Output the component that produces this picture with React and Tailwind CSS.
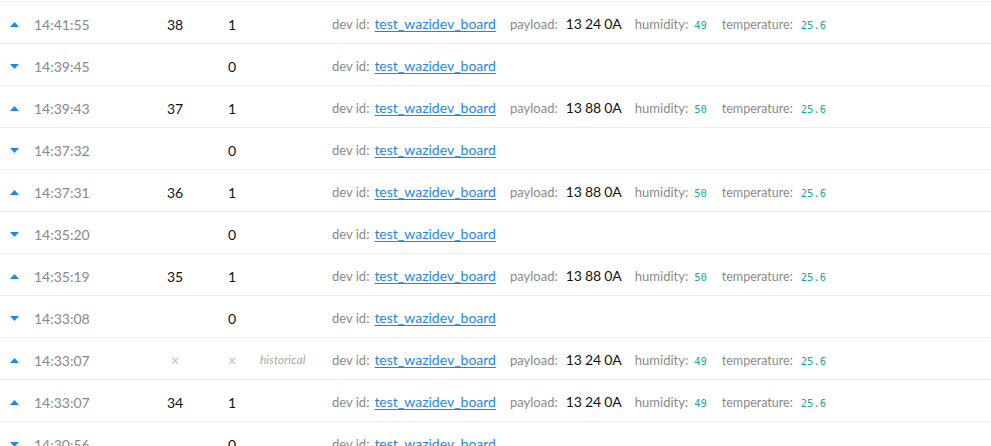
import React from "react";

const rows = [
  { dir: "up", time: "14:41:55", cnt: "38", port: "1", payload: ["13", "24", "0A"], hum: "49", temp: "25.6" },
  { dir: "down", time: "14:39:45", port: "0" },
  { dir: "up", time: "14:39:43", cnt: "37", port: "1", payload: ["13", "88", "0A"], hum: "50", temp: "25.6" },
  { dir: "down", time: "14:37:32", port: "0" },
  { dir: "up", time: "14:37:31", cnt: "36", port: "1", payload: ["13", "88", "0A"], hum: "50", temp: "25.6" },
  { dir: "down", time: "14:35:20", port: "0" },
  { dir: "up", time: "14:35:19", cnt: "35", port: "1", payload: ["13", "88", "0A"], hum: "50", temp: "25.6" },
  { dir: "down", time: "14:33:08", port: "0" },
  { dir: "up", time: "14:33:07", historical: true, payload: ["13", "24", "0A"], hum: "49", temp: "25.6" },
  { dir: "up", time: "14:33:07", cnt: "34", port: "1", payload: ["13", "24", "0A"], hum: "49", temp: "25.6" },
  { dir: "down", time: "14:30:56", port: "0" },
];

function Arrow({ dir }) {
  return (
    <svg width="9" height="5" viewBox="0 0 9 5" className="block">
      {dir === "up" ? (
        <polygon points="0,5 4.5,0 9,5" fill="#1e88e5" />
      ) : (
        <polygon points="0,0 4.5,5 9,0" fill="#1e88e5" />
      )}
    </svg>
  );
}

function Row({ r }) {
  return (
    <div className="flex h-[42px] items-center pt-[3px] border-t border-[#ececec] whitespace-nowrap">
      <div className="w-[34px] pl-[10px] flex items-center">
        <Arrow dir={r.dir} />
      </div>
      <div className="w-[110px] text-[14px] text-[#888888]">{r.time}</div>
      <div className="w-[62px] text-center text-[14px] text-[#111111]">
        {r.historical ? <span className="text-[15px] text-[#bdbdbd]">×</span> : r.cnt}
      </div>
      <div className="w-[52px] text-center text-[14px] text-[#111111]">
        {r.historical ? <span className="text-[15px] text-[#bdbdbd]">×</span> : r.port}
      </div>
      <div className="w-[74px] pl-[2px] text-[12px] italic text-[#aaaaaa]">
        {r.historical ? "historical" : ""}
      </div>
      <div className="flex items-baseline">
        <span className="text-[13px] text-[#8a8a8a]">dev id:</span>
        <a className="ml-[5px] text-[14px] text-[#1e88e5] underline underline-offset-[2px] cursor-pointer">
          test_wazidev_board
        </a>
        {r.payload && (
          <>
            <span className="ml-[14px] text-[13px] text-[#8a8a8a]">payload:</span>
            <span className="ml-[8px] text-[14px] text-[#111111] flex gap-[3px]">
              {r.payload.map((b, i) => (
                <span key={i}>{b}</span>
              ))}
            </span>
            <span className="ml-[13px] text-[13px] text-[#8a8a8a]">humidity:</span>
            <span className="ml-[6px] text-[10.5px] text-[#1aa89a] font-['DejaVu_Sans_Mono',monospace]">{r.hum}</span>
            <span className="ml-[15px] text-[12.5px] text-[#8a8a8a]">temperature:</span>
            <span className="ml-[8px] text-[10.5px] text-[#1aa89a] font-['DejaVu_Sans_Mono',monospace]">{r.temp}</span>
          </>
        )}
      </div>
    </div>
  );
}

export default function App() {
  return (
    <div className="w-[991px] h-[446px] overflow-hidden bg-white pt-[1px] font-['Lato',sans-serif]">
      {rows.map((r, i) => (
        <Row key={i} r={r} />
      ))}
    </div>
  );
}
